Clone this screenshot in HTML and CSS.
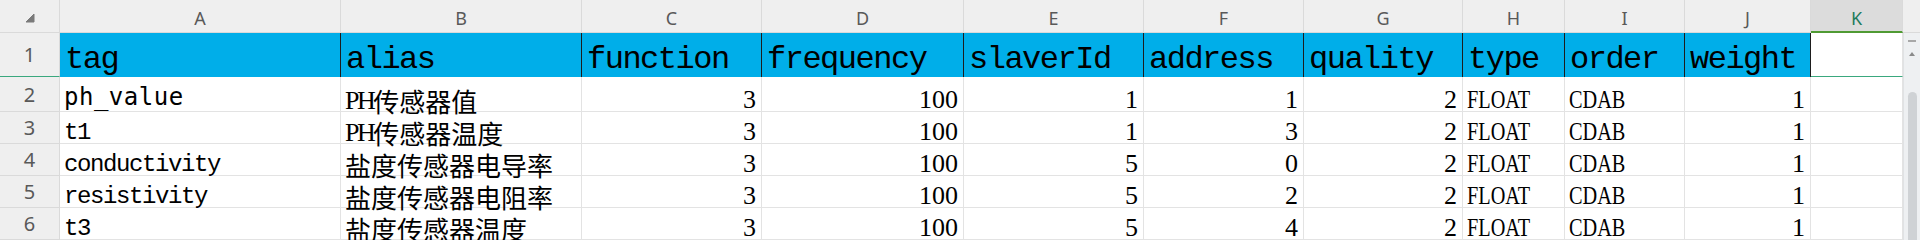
FILE: index.html
```html
<!DOCTYPE html>
<html lang="zh-CN">

<head>
    <meta charset="UTF-8">
    <meta name="viewport" content="width=device-width, initial-scale=1.0">
    <title>表格 - 点位配置</title>
    <link rel="stylesheet" href="styles.css">
</head>

<body>
    <div class="sheet">
        <!-- column headers -->
        <div class="corner">
            <svg width="10" height="10" viewBox="0 0 10 10"><path d="M9 1 L9 9 L1 9 Z" fill="#7a7a7a" stroke="#7a7a7a" stroke-linejoin="round" stroke-width="1"/></svg>
        </div>
        <div class="colhead">A</div>
        <div class="colhead">B</div>
        <div class="colhead">C</div>
        <div class="colhead">D</div>
        <div class="colhead">E</div>
        <div class="colhead">F</div>
        <div class="colhead">G</div>
        <div class="colhead">H</div>
        <div class="colhead">I</div>
        <div class="colhead">J</div>
        <div class="colhead active">K</div>
        <div class="colhead filler"></div>

        <div class="scroll">
            <div class="scroll-dash"></div>
            <div class="scroll-up"></div>
            <div class="scroll-thumb"></div>
        </div>

        <!-- row 1 : titles -->
        <div class="rowhead active">1</div>
        <div class="cell title">tag</div>
        <div class="cell title">alias</div>
        <div class="cell title">function</div>
        <div class="cell title">frequency</div>
        <div class="cell title">slaverId</div>
        <div class="cell title">address</div>
        <div class="cell title">quality</div>
        <div class="cell title">type</div>
        <div class="cell title">order</div>
        <div class="cell title">weight</div>
        <div class="cell sel"></div>

        <!-- row 2 -->
        <div class="rowhead">2</div>
        <div class="cell code">ph_value</div>
        <div class="cell"><span class="ph">PH</span><span class="cjk">传感器值</span></div>
        <div class="cell num">3</div>
        <div class="cell num">100</div>
        <div class="cell num">1</div>
        <div class="cell num">1</div>
        <div class="cell num">2</div>
        <div class="cell serif"><span class="sx">FLOAT</span></div>
        <div class="cell serif"><span class="sx">CDAB</span></div>
        <div class="cell num">1</div>
        <div class="cell"></div>

        <!-- row 3 -->
        <div class="rowhead">3</div>
        <div class="cell">t1</div>
        <div class="cell"><span class="ph">PH</span><span class="cjk">传感器温度</span></div>
        <div class="cell num">3</div>
        <div class="cell num">100</div>
        <div class="cell num">1</div>
        <div class="cell num">3</div>
        <div class="cell num">2</div>
        <div class="cell serif"><span class="sx">FLOAT</span></div>
        <div class="cell serif"><span class="sx">CDAB</span></div>
        <div class="cell num">1</div>
        <div class="cell"></div>

        <!-- row 4 -->
        <div class="rowhead">4</div>
        <div class="cell">conductivity</div>
        <div class="cell"><span class="cjk">盐度传感器电导率</span></div>
        <div class="cell num">3</div>
        <div class="cell num">100</div>
        <div class="cell num">5</div>
        <div class="cell num">0</div>
        <div class="cell num">2</div>
        <div class="cell serif"><span class="sx">FLOAT</span></div>
        <div class="cell serif"><span class="sx">CDAB</span></div>
        <div class="cell num">1</div>
        <div class="cell"></div>

        <!-- row 5 -->
        <div class="rowhead">5</div>
        <div class="cell">resistivity</div>
        <div class="cell"><span class="cjk">盐度传感器电阻率</span></div>
        <div class="cell num">3</div>
        <div class="cell num">100</div>
        <div class="cell num">5</div>
        <div class="cell num">2</div>
        <div class="cell num">2</div>
        <div class="cell serif"><span class="sx">FLOAT</span></div>
        <div class="cell serif"><span class="sx">CDAB</span></div>
        <div class="cell num">1</div>
        <div class="cell"></div>

        <!-- row 6 -->
        <div class="rowhead">6</div>
        <div class="cell">t3</div>
        <div class="cell"><span class="cjk">盐度传感器温度</span></div>
        <div class="cell num">3</div>
        <div class="cell num">100</div>
        <div class="cell num">5</div>
        <div class="cell num">4</div>
        <div class="cell num">2</div>
        <div class="cell serif"><span class="sx">FLOAT</span></div>
        <div class="cell serif"><span class="sx">CDAB</span></div>
        <div class="cell num">1</div>
        <div class="cell"></div>
    </div>
</body>

</html>
```

FILE: styles.css
```css
body {
    margin: 0;
    background-color: #fff;
    overflow: hidden;
}

.sheet {
    display: grid;
    grid-template-columns: 60px 281px 241px 180px 202px 180px 160px 159px 102px 120px 126px 92px 17px;
    grid-template-rows: 33px 44px 35px 32px 32px 32px 32px;
    width: 1920px;
    height: 240px;
    overflow: hidden;
    font-family: 'Liberation Mono', monospace;
    color: #000;
}

/* headers */
.corner,
.colhead,
.rowhead {
    display: flex;
    align-items: center;
    justify-content: center;
    box-sizing: border-box;
    background-color: #efefef;
    color: #595959;
    font-family: 'Noto Sans', sans-serif;
    border-right: 1px solid #dadada;
    border-bottom: 1px solid #dadada;
}

.corner svg {
    margin-top: 3px;
}

.colhead {
    font-size: 18px;
    padding-top: 4px;
}

.colhead.active {
    background-color: #dcdcdc;
    color: #1e7b5c;
    border-bottom: 2px solid #4f9a33;
}

.colhead.filler {
    border-right: none;
}

.rowhead {
    font-size: 20px;
}

.rowhead.active {
    border-bottom: 1px solid #3aa87e;
}

/* cells */
.cell {
    display: flex;
    align-items: flex-end;
    box-sizing: border-box;
    padding: 0 4px;
    border-right: 1px solid #e3e3e3;
    border-bottom: 1px solid #e3e3e3;
    font-size: 24px;
    letter-spacing: -1.4px;
    line-height: 21px;
    white-space: nowrap;
}

.cell.num {
    justify-content: flex-end;
    padding-right: 5px;
    font-family: 'Liberation Serif', serif;
    font-size: 26px;
    letter-spacing: 0;
    line-height: 23px;
}

.cell.serif {
    font-family: 'Liberation Serif', serif;
    font-size: 26px;
    letter-spacing: 0;
    line-height: 23px;
    padding-left: 4px;
}

.sx {
    display: inline-block;
    transform: scaleX(0.78);
    transform-origin: 0 100%;
}

.ph {
    font-family: 'Liberation Serif', serif;
    font-size: 26px;
    letter-spacing: -2.5px;
}

.cell.title {
    background-color: #00aee9;
    border-right: 1px solid #1d1d1d;
    border-bottom: none;
    font-size: 32px;
    letter-spacing: -1.5px;
    line-height: 35px;
    padding-left: 5px;
}

.cell.sel {
    border-bottom: 1px solid #3aa87e;
}

.cell.code {
    font-family: 'DejaVu Sans Mono', monospace;
    letter-spacing: 0.5px;
    line-height: 27px;
}

.cjk {
    font-family: 'Noto Sans CJK SC', sans-serif;
    font-size: 26px;
    letter-spacing: 0;
}

/* vertical scrollbar */
.scroll {
    grid-column: 13;
    grid-row: 2 / 8;
    display: flex;
    flex-direction: column;
    align-items: center;
    background-color: #eef0f2;
    border-left: 1px solid #e0e2e4;
}

.scroll-dash {
    width: 8px;
    height: 2px;
    margin-top: 7px;
    background-color: #a8a8a8;
}

.scroll-up {
    width: 0;
    height: 0;
    margin-top: 10px;
    border-left: 3px solid transparent;
    border-right: 3px solid transparent;
    border-bottom: 4px solid #8a8a8a;
}

.scroll-thumb {
    flex: 1;
    width: 9px;
    margin-top: 36px;
    border-radius: 5px 5px 0 0;
    background-color: #cfd2d5;
}
```
